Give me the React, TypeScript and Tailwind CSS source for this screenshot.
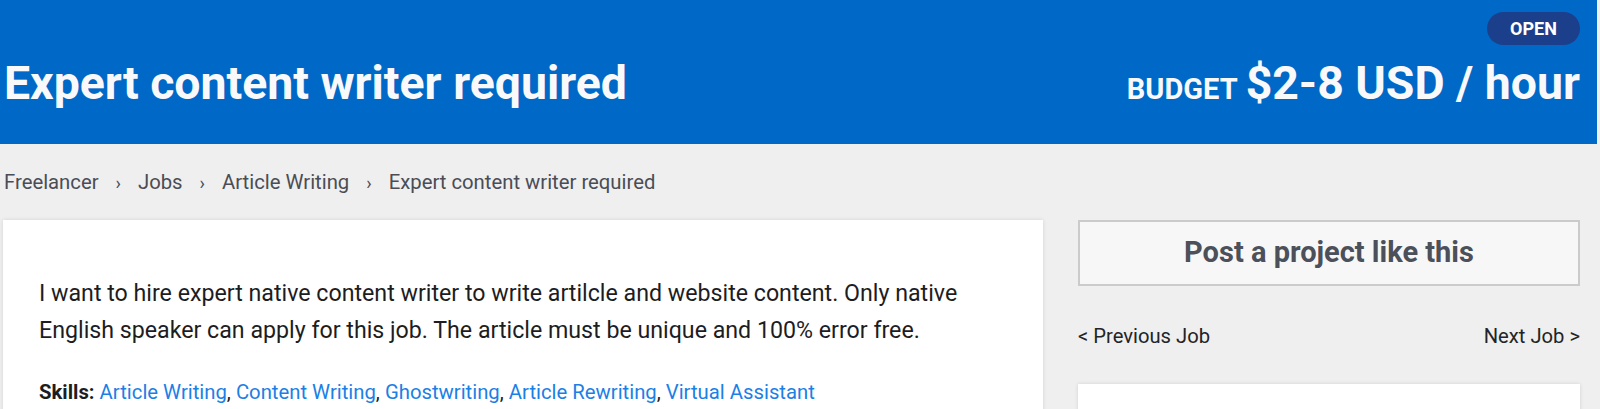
import React from "react";

export default function App() {
  const skills = ["Article Writing", "Content Writing", "Ghostwriting", "Article Rewriting", "Virtual Assistant"];
  const crumbs = ["Freelancer", "Jobs", "Article Writing", "Expert content writer required"];
  return (
    <div className="w-[1600px] h-[409px] overflow-hidden bg-[#efefef] font-['Roboto',_'Liberation_Sans',_sans-serif]">
      <header className="w-[1597px] h-[144px] bg-[#0069c8] flex flex-col pl-[4px] pr-[17px] pt-[12px] pb-[33px]">
        <div className="flex justify-end">
          <span className="h-[33px] w-[93px] rounded-full bg-[#1b3f8b] text-white text-[18px] font-bold flex items-center justify-center leading-none">
            OPEN
          </span>
        </div>
        <div className="mt-auto flex justify-between items-baseline">
          <h1 className="text-[46.4px] leading-[56px] font-bold text-[#f9f9f9]">Expert content writer required</h1>
          <div className="flex items-baseline gap-[8px] text-[#f9f9f9] font-bold">
            <span className="text-[29px] leading-none">BUDGET</span>
            <span className="text-[46.4px] leading-[56px]">$2-8 USD / hour</span>
          </div>
        </div>
      </header>
      <div className="pl-[3px] pr-[20px]">
        <nav className="h-[76px] flex items-center pl-[1px] text-[20.3px] text-[#4a4d55]">
          {crumbs.map((c, i) => (
            <React.Fragment key={c}>
              {i > 0 && <span className="mx-[17px] text-[18px]">›</span>}
              <span>{c}</span>
            </React.Fragment>
          ))}
        </nav>
        <div className="flex gap-[35px] items-start">
          <div className="w-[1040px] bg-white shadow-[0_0_4px_rgba(0,0,0,0.12)] pl-[36px] pr-[40px] pt-[55px] pb-[40px]">
            <p className="text-[23.2px] leading-[37px] text-[#1d1d1f]">
              I want to hire expert native content writer to write artilcle and website content. Only native English speaker can apply for this job. The article must be unique and 100% error free.
            </p>
            <p className="mt-[30px] text-[20.3px] leading-[26px] text-[#1d1d1f]">
              <span className="font-bold">Skills: </span>
              {skills.map((s, i) => (
                <React.Fragment key={s}>
                  <a className="text-[#1b80e6]">{s}</a>
                  {i < skills.length - 1 && ", "}
                </React.Fragment>
              ))}
            </p>
          </div>
          <div className="w-[502px] flex flex-col">
            <button className="h-[66px] w-full border-2 border-[#cbcbcb] bg-[#f7f7f7] text-[29px] font-bold text-[#4b505a]">
              Post a project like this
            </button>
            <div className="flex justify-between items-center h-[100px] text-[20.2px] text-[#222428]">
              <span>&lt; Previous Job</span>
              <span>Next Job &gt;</span>
            </div>
            <div className="h-[120px] bg-white shadow-[0_0_4px_rgba(0,0,0,0.12)] mt-[-2px]" />
          </div>
        </div>
      </div>
    </div>
  );
}
